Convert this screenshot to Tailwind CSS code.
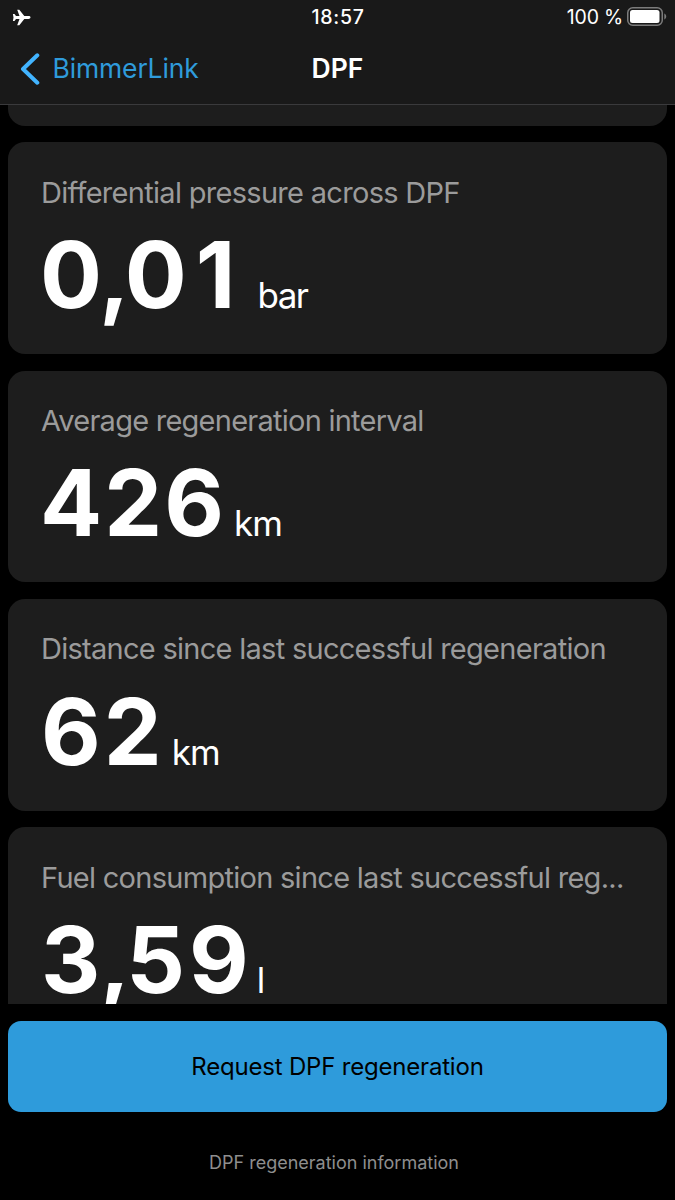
<!DOCTYPE html>
<html lang="en">

<head>
    <meta charset="UTF-8">
    <meta name="viewport" content="width=device-width, initial-scale=1.0">
    <title>DPF</title>
    <script src="https://cdn.jsdelivr.net/npm/@tailwindcss/browser@4"></script>
</head>

<body class="bg-black text-white font-['Inter','Liberation_Sans',sans-serif]">
    <div class="flex flex-col w-[675px] h-[1200px] overflow-hidden">
        <!-- Header -->
        <header class="shrink-0 h-[105px] bg-[#191919] border-b border-[#3a3a3c]">
            <!-- Status bar -->
            <div class="grid grid-cols-3 items-center h-[34px] pl-3 pr-2 text-[19.500px] leading-[34px]">
                <svg class="w-[19px] h-[17px]" viewBox="0 0 19 17" fill="#fff">
                    <path d="M18.500 8.500c0-.9-.9-1.400-2-1.400h-4.200L7.300.8H5.200l2.300 6.300H4L2.500 5H.9l.6 3.500L.9 12h1.600L4 9.900h3.500L5.200 16.200h2.100l5-6.300h4.200c1.100 0 2-.5 2-1.400z" />
                </svg>
                <span class="text-center font-medium tracking-[0.7px] pr-[3px]">18:57</span>
                <div class="flex items-center justify-end gap-1">
                    <span class="tracking-[-0.2px]">100 %</span>
                    <svg class="w-10 h-[19px] -mt-0.5" viewBox="0 0 40 19" fill="none">
                        <rect x=".75" y=".75" width="34.500" height="17.500" rx="5" stroke="#7c7c7c" stroke-width="1.500" />
                        <rect x="3" y="3" width="29.500" height="13" rx="2.500" fill="#fff" />
                        <path d="M37.300 6.500c1.200.5 1.900 1.600 1.900 3s-.7 2.500-1.900 3z" fill="#7c7c7c" />
                    </svg>
                </div>
            </div>
            <!-- Navigation -->
            <nav class="grid grid-cols-3 items-center h-[69px] px-5 text-[26.500px] leading-[69px]">
                <a class="flex items-center gap-[12.500px] text-[#2f9bdb]">
                    <svg class="w-5 h-8" viewBox="0 0 20 32" fill="none" stroke="#42b4ff" stroke-width="4" stroke-linecap="round" stroke-linejoin="round">
                        <path d="M17.300 2.300L3 16l14.300 13.700" />
                    </svg>
                    <span class="tracking-[-0.15px]">BimmerLink</span>
                </a>
                <h1 class="text-center font-semibold">DPF</h1>
            </nav>
        </header>

        <!-- Values -->
        <main class="flex-1 min-h-0 overflow-hidden flex flex-col gap-[16.600px] px-2">
            <div class="shrink-0 h-[20.600px] rounded-b-[17px] bg-[#1d1d1d]"></div>

            <section class="shrink-0 h-[211.800px] rounded-[17px] bg-[#1d1d1d] px-[33px] pt-[32.400px]">
                <h2 class="text-[29px] leading-9 tracking-[-0.7px] text-[#9b9b9b] whitespace-nowrap">Differential pressure across DPF</h2>
                <p class="mt-[8.300px] flex items-baseline leading-[112px]">
                    <span class="text-[92px] font-bold -ml-px"><span class="tracking-[-3px]">0</span><span class="tracking-[-5px]">,</span><span class="tracking-[9px]">0</span>1</span>
                    <span class="text-[35px] tracking-[-1.6px] ml-[22px]">bar</span>
                </p>
            </section>

            <section class="shrink-0 h-[211.800px] rounded-[17px] bg-[#1d1d1d] px-[33px] pt-[32.400px]">
                <h2 class="text-[29px] leading-9 tracking-[-0.75px] text-[#9b9b9b] whitespace-nowrap">Average regeneration interval</h2>
                <p class="mt-[8.300px] flex items-baseline leading-[112px]">
                    <span class="text-[92px] font-bold tracking-[2px] -ml-px">426</span>
                    <span class="text-[35px] tracking-[-1px] ml-2">km</span>
                </p>
            </section>

            <section class="shrink-0 h-[211.800px] rounded-[17px] bg-[#1d1d1d] px-[33px] pt-[32.400px]">
                <h2 class="text-[29px] leading-9 tracking-[-0.72px] text-[#9b9b9b] whitespace-nowrap">Distance since last successful regeneration</h2>
                <p class="mt-[8.300px] flex items-baseline leading-[112px]">
                    <span class="text-[92px] font-bold tracking-[3px]">62</span>
                    <span class="text-[35px] tracking-[-1px] ml-[7px]">km</span>
                </p>
            </section>

            <section class="shrink-0 h-[211.800px] rounded-[17px] bg-[#1d1d1d] px-[33px] pt-[32.400px]">
                <h2 class="text-[29px] leading-9 tracking-[-0.72px] text-[#9b9b9b] whitespace-nowrap">Fuel consumption since last successful reg...</h2>
                <p class="mt-[8.300px] flex items-baseline leading-[112px]">
                    <span class="text-[92px] font-bold"><span class="tracking-[-1px]">3</span><span class="tracking-[-4px]">,</span><span class="tracking-[4px]">5</span>9</span>
                    <span class="text-[35px] ml-2">l</span>
                </p>
            </section>
        </main>

        <!-- Actions -->
        <footer class="shrink-0 h-[196px] px-2 pt-[17px] flex flex-col items-center">
            <button class="w-full h-[91px] rounded-[13px] bg-[#2e9bdb] text-black text-[24px] tracking-[-0.2px]">Request DPF regeneration</button>
            <a class="mt-[39px] mr-[7px] text-[18px] leading-6 text-[#8e8e8e]">DPF regeneration information</a>
        </footer>
    </div>
</body>

</html>
